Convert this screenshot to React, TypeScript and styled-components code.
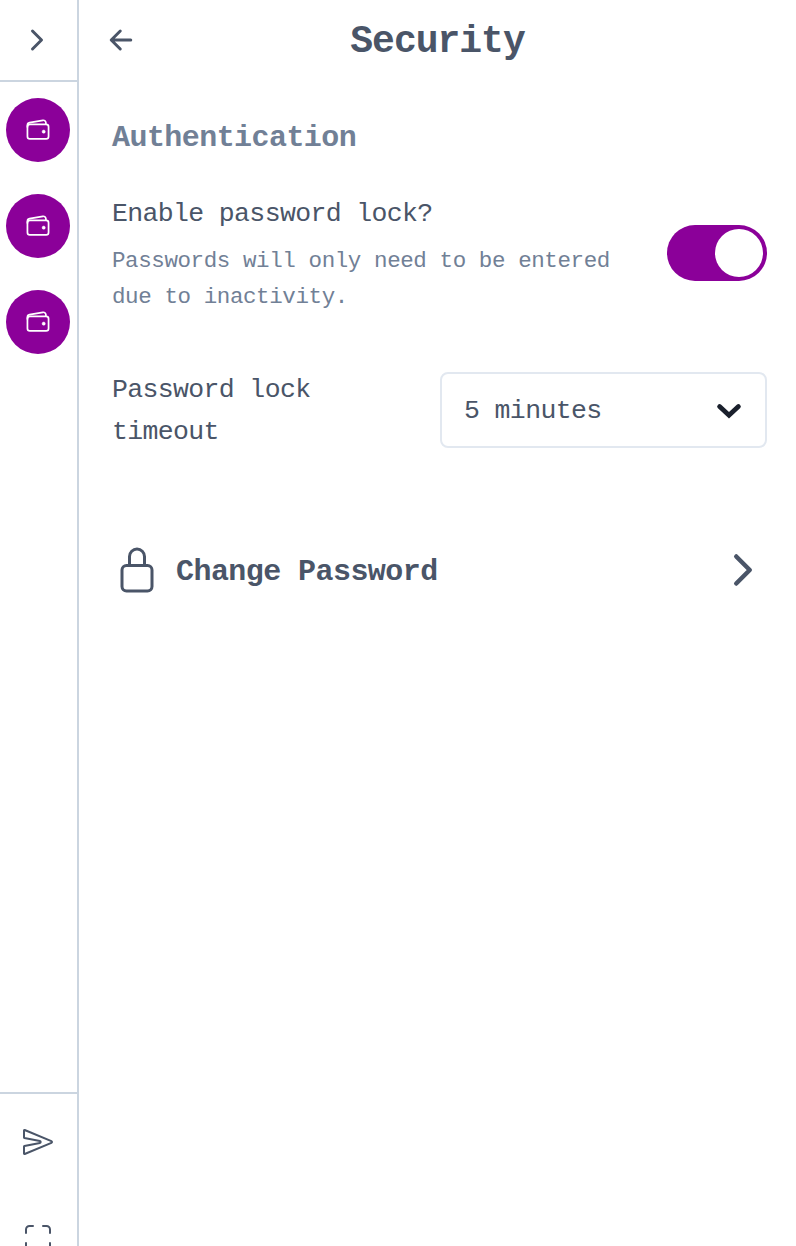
import React from 'react';
import styled, { createGlobalStyle } from 'styled-components';
import {
  IoArrowBack,
  IoChevronForward,
  IoLockClosedOutline,
  IoScanOutline,
  IoSendOutline,
  IoWalletOutline,
} from 'react-icons/io5';

const colors = {
  border: '#cbd5e0',
  field: '#e2e8f0',
  text: '#4a5568',
  subtext: '#718096',
  primary: '#8b0099',
  dark: '#1a202c',
};

const GlobalStyle = createGlobalStyle`
  * { box-sizing: border-box; }
  body {
    margin: 0;
    background: #fff;
    font-family: "Liberation Mono", monospace;
    color: ${colors.text};
    overflow: hidden;
  }
  button { padding: 0; border: 0; background: none; color: inherit; font: inherit; }
  svg { display: block; flex: none; }
`;

const Page = styled.div`
  display: flex;
  height: 1246px;
  overflow: hidden;
`;

const SideBar = styled.aside`
  display: flex;
  flex-direction: column;
  flex: none;
  width: 79px;
  border-right: 2px solid ${colors.border};
`;

const SideBarToggle = styled.button`
  display: flex;
  align-items: center;
  height: 82px;
  padding: 0 0 0 21px;
  border-bottom: 2px solid ${colors.border};
`;

const AccountList = styled.div`
  display: flex;
  flex: 1;
  flex-direction: column;
  gap: 32px;
  padding: 16px 0 0 6px;
`;

const Account = styled.button`
  display: flex;
  align-items: center;
  justify-content: center;
  width: 64px;
  height: 64px;
  border-radius: 50%;
  background: ${colors.primary};
  color: #fff;

  rect, path { stroke-width: 34px; }
  path:last-child { stroke-width: 8px; }
`;

const SideBarActions = styled.div`
  height: 154px;
  overflow: hidden;
  border-top: 2px solid ${colors.border};
`;

const SideBarAction = styled.button`
  display: flex;
  align-items: center;
  width: 77px;
  height: 96px;
  padding-left: 22px;
`;

const Main = styled.main`
  flex: 1;
  min-width: 0;
`;

const Header = styled.header`
  display: grid;
  grid-template-columns: 58px 1fr 58px;
  align-items: center;
  height: 80px;
`;

const BackButton = styled.button`
  display: flex;
  padding-left: 26px;
`;

const Text = styled.p<{ $size: number; $line: number; $tone?: string; $spacing: number }>`
  margin: 0;
  font-size: ${(p) => p.$size}px;
  line-height: ${(p) => p.$line}px;
  letter-spacing: ${(p) => p.$spacing}px;
  color: ${(p) => p.$tone ?? colors.text};
`;

const Heading = styled(Text)`
  font-weight: 700;
`;

const Title = styled(Heading)`
  padding-top: 4px;
  text-align: center;
`;

const Content = styled.div`
  padding: 34px 29px 0 33px;
`;

const SwitchRow = styled.div`
  display: flex;
  align-items: center;
  justify-content: space-between;
  margin-top: 31px;
`;

const SwitchLabel = styled.div`
  display: flex;
  flex-direction: column;
  gap: 8px;
  width: 520px;
`;

const Switch = styled.button`
  display: flex;
  justify-content: flex-end;
  width: 100px;
  height: 56px;
  padding: 4px;
  margin-bottom: 2px;
  border-radius: 28px;
  background: ${colors.primary};
`;

const Thumb = styled.span`
  width: 48px;
  height: 48px;
  border-radius: 50%;
  background: #fff;
`;

const SelectRow = styled.div`
  display: grid;
  grid-template-columns: 1fr 327px;
  align-items: center;
  column-gap: 32px;
  margin-top: 54px;
`;

const Select = styled.button`
  display: flex;
  align-items: center;
  justify-content: space-between;
  height: 76px;
  padding: 2px 23px 0 22px;
  margin-bottom: 2px;
  border: 2px solid ${colors.field};
  border-radius: 8px;
`;

const LinkRow = styled.button`
  display: flex;
  align-items: center;
  width: 100%;
  height: 96px;
  margin-top: 69px;
  padding-left: 1px;
`;

const LinkLabel = styled(Heading)`
  flex: 1;
  margin-left: 15px;
  padding-top: 3px;
  text-align: left;
`;

const accounts = ['Account 1', 'Account 2', 'Account 3'];

export default function App() {
  return (
    <>
      <GlobalStyle />
      <Page>
        <SideBar>
          <SideBarToggle>
            <IoChevronForward size={32} />
          </SideBarToggle>
          <AccountList>
            {accounts.map((name) => (
              <Account key={name}>
                <IoWalletOutline size={26} />
              </Account>
            ))}
          </AccountList>
          <SideBarActions>
            <SideBarAction>
              <IoSendOutline size={32} />
            </SideBarAction>
            <SideBarAction>
              <IoScanOutline size={32} />
            </SideBarAction>
          </SideBarActions>
        </SideBar>
        <Main>
          <Header>
            <BackButton>
              <IoArrowBack size={32} />
            </BackButton>
            <Title as="h1" $size={38} $line={48} $spacing={-1}>
              Security
            </Title>
          </Header>
          <Content>
            <Heading as="h2" $size={30} $line={48} $spacing={-0.56} $tone={colors.subtext}>
              Authentication
            </Heading>
            <SwitchRow>
              <SwitchLabel>
                <Text $size={26.5} $line={42} $spacing={-0.64}>
                  Enable password lock?
                </Text>
                <Text $size={22.5} $line={36} $spacing={-0.4} $tone={colors.subtext}>
                  Passwords will only need to be entered due to inactivity.
                </Text>
              </SwitchLabel>
              <Switch role="switch" aria-checked="true">
                <Thumb />
              </Switch>
            </SwitchRow>
            <SelectRow>
              <Text $size={26.5} $line={42} $spacing={-0.64}>
                Password lock
                <br />
                timeout
              </Text>
              <Select>
                <Text as="span" $size={26.5} $line={42} $spacing={-0.62}>
                  5 minutes
                </Text>
                <svg width="26" height="16" viewBox="0 0 26 16" fill="none" stroke={colors.dark} strokeWidth="4.8" strokeLinecap="round" strokeLinejoin="miter">
                  <path d="M3.6 3.6 13 12.2l9.4-8.6" />
                </svg>
              </Select>
            </SelectRow>
            <LinkRow>
              <IoLockClosedOutline size={48} />
              <LinkLabel as="span" $size={30} $line={48} $spacing={-0.56}>
                Change Password
              </LinkLabel>
              <IoChevronForward size={48} />
            </LinkRow>
          </Content>
        </Main>
      </Page>
    </>
  );
}
